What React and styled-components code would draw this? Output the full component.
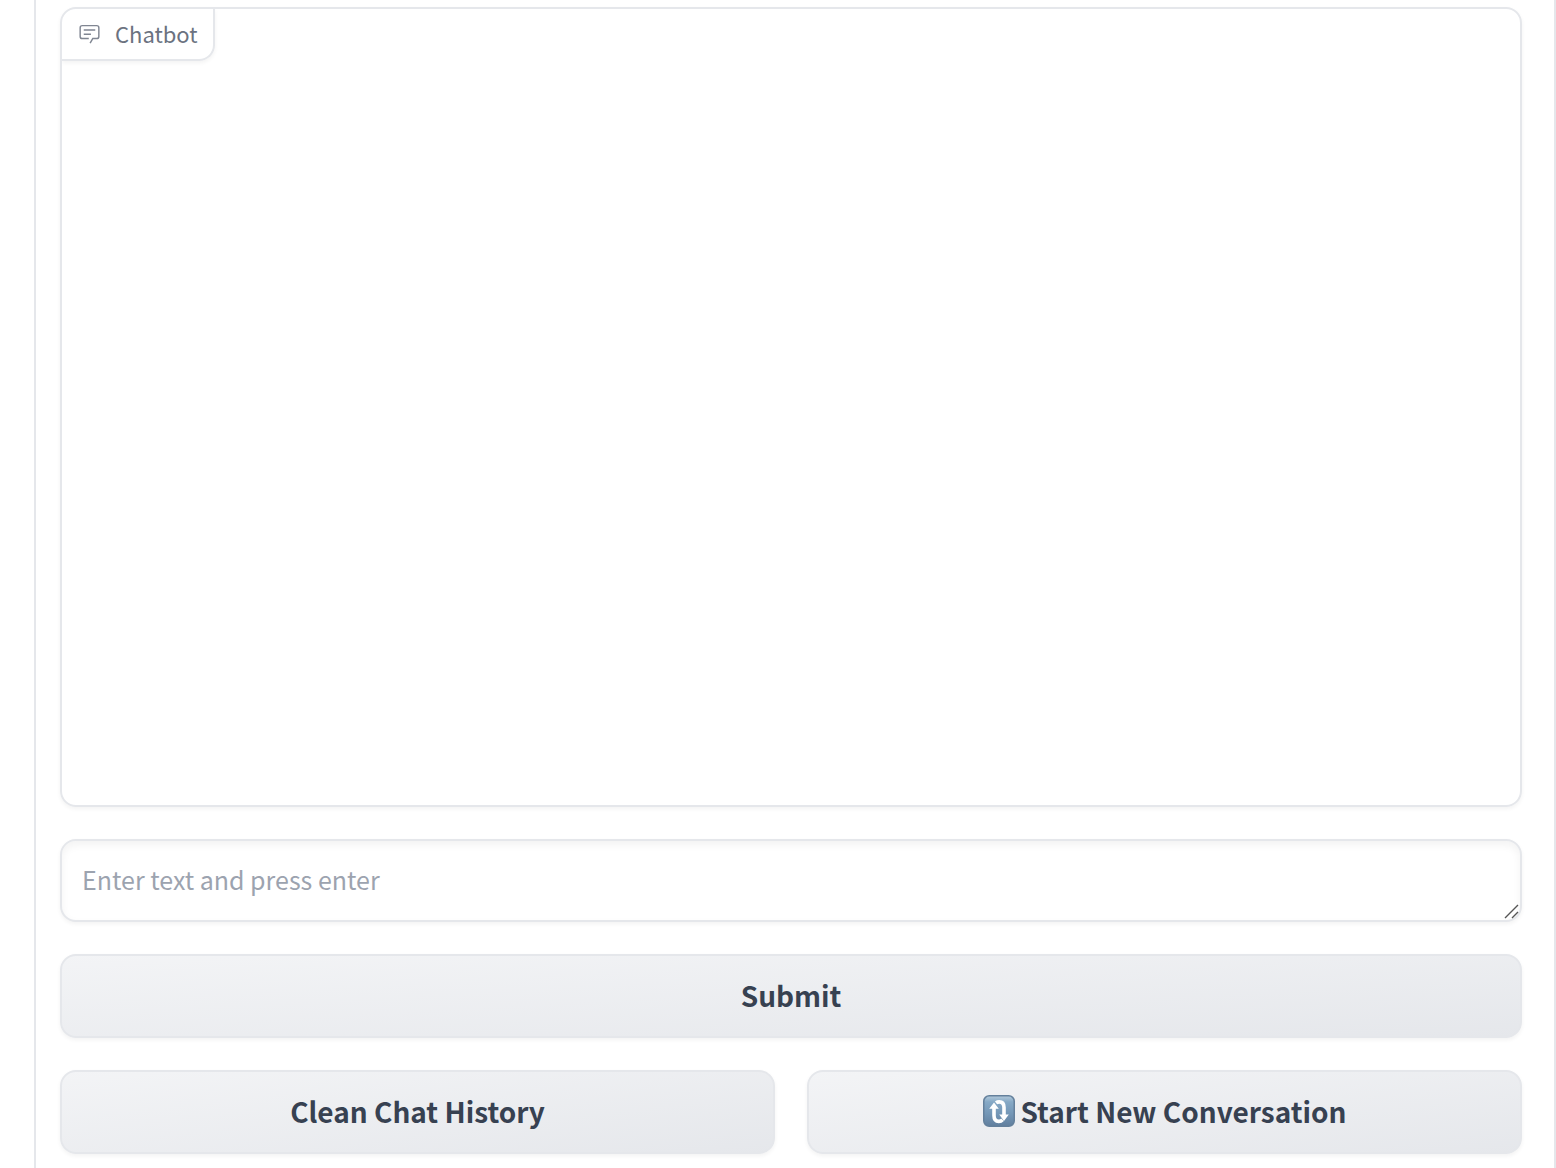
import React from "react";
import styled, { createGlobalStyle } from "styled-components";

const GlobalStyle = createGlobalStyle`
  *, *::before, *::after { box-sizing: border-box; }
  body {
    margin: 0;
    background: #ffffff;
    color: #374151;
    font-family: "Noto Sans CJK SC", "Open Sans", sans-serif;
  }
`;

const Panel = styled.main`
  display: flex;
  flex-direction: column;
  gap: 32px;
  min-height: 100vh;
  margin-left: 34px;
  padding: 7px 32px 14px 24px;
  border: solid #e5e7eb;
  border-width: 0 2px;
`;

const ChatCard = styled.section`
  display: flex;
  align-items: flex-start;
  height: 800px;
  overflow: hidden;
  border: 2px solid #e5e7eb;
  border-radius: 16px;
  box-shadow: 0 2px 4px rgba(0, 0, 0, 0.05);
`;

const ChatLabel = styled.h2`
  display: flex;
  align-items: center;
  gap: 14px;
  height: 52px;
  margin: 0;
  padding: 0 15px 2px 16px;
  border: solid #e5e7eb;
  border-width: 0 2px 2px 0;
  border-bottom-right-radius: 16px;
  box-shadow: 0 2px 4px rgba(0, 0, 0, 0.05);
  color: #6b7280;
  font-size: 22px;
  font-weight: 400;
  line-height: 32px;
`;

const LabelIcon = styled.svg`
  width: 23px;
  height: 23px;
  fill: currentColor;
  opacity: 0.85;
`;

const Field = styled.label`
  position: relative;
  display: flex;
`;

const MessageInput = styled.textarea`
  width: 100%;
  height: 83px;
  padding: 19px 20px;
  border: 2px solid #e5e7eb;
  border-radius: 16px;
  outline: none;
  background: #ffffff;
  box-shadow: 0 2px 4px rgba(0, 0, 0, 0.05), inset 0 4px 8px rgba(0, 0, 0, 0.05);
  color: #1f2937;
  font-family: inherit;
  font-size: 25px;
  line-height: 39px;
  overflow: hidden;
  resize: vertical;

  &::placeholder { color: #9ca3af; opacity: 1; }
  &::-webkit-resizer { background: transparent; }
`;

const Grip = styled.svg`
  position: absolute;
  right: 3px;
  bottom: 3px;
  width: 15px;
  height: 15px;
  pointer-events: none;
`;

const ButtonRow = styled.div`
  display: grid;
  grid-template-columns: 1fr 1fr;
  gap: 32px;
`;

const Button = styled.button`
  display: flex;
  align-items: center;
  justify-content: center;
  gap: 6px;
  height: 84px;
  padding: 0 24px 2px;
  border: 2px solid #e5e7eb;
  border-radius: 16px;
  background: linear-gradient(to bottom right, #f3f4f6, #e5e7eb) border-box;
  box-shadow: 0 2px 4px rgba(0, 0, 0, 0.05);
  color: #374151;
  font-family: inherit;
  font-size: 28px;
  font-weight: 600;
  line-height: 44px;
  cursor: pointer;
`;

const ButtonIcon = styled.svg`
  width: 32px;
  height: 32px;
`;

function ChatIcon() {
  return (
    <LabelIcon viewBox="0 0 32 32" aria-hidden="true">
      <path d="M17.74 30L16 29l4-7h6a2 2 0 0 0 2-2V8a2 2 0 0 0-2-2H6a2 2 0 0 0-2 2v12a2 2 0 0 0 2 2h9v2H6a4 4 0 0 1-4-4V8a4 4 0 0 1 4-4h20a4 4 0 0 1 4 4v12a4 4 0 0 1-4 4h-4.84Z" />
      <path d="M8 10h16v2H8zm0 6h10v2H8z" />
    </LabelIcon>
  );
}

function RestartIcon() {
  return (
    <ButtonIcon viewBox="0 0 32 32" aria-hidden="true">
      <defs>
        <linearGradient id="tile" x1="0" y1="0" x2="0" y2="1">
          <stop offset="0" stopColor="#b4cbdc" />
          <stop offset="0.2" stopColor="#86a9c6" />
          <stop offset="0.6" stopColor="#7396b6" />
          <stop offset="1" stopColor="#617f9e" />
        </linearGradient>
      </defs>
      <rect x="0.75" y="0.75" width="30.5" height="30.5" rx="5.5" fill="url(#tile)" stroke="#64809c" strokeWidth="1.5" />
      <g fill="none" stroke="#ffffff" strokeWidth="3.6">
        <path d="M11 13v7.5c0 3.6 1.8 5.9 4.8 5.9 1.6 0 2.8-.5 3.8-1.6" />
        <path d="M21 20v-7.5c0-3.6-1.8-5.6-4.8-5.6-1.3 0-2.3.3-3.2 1" />
      </g>
      <path fill="#ffffff" d="M11 7.4l4.8 6.4H6.2zM21 26l-4.8-6.4h9.6z" />
    </ButtonIcon>
  );
}

export default function App() {
  return (
    <>
      <GlobalStyle />
      <Panel>
        <ChatCard aria-labelledby="chat-title">
          <ChatLabel id="chat-title">
            <ChatIcon />
            Chatbot
          </ChatLabel>
        </ChatCard>
        <Field>
          <MessageInput rows={1} aria-label="Message" placeholder="Enter text and press enter" />
          <Grip viewBox="0 0 15 15" aria-hidden="true">
            <path d="M1 14L14 1M8 14l6-6" stroke="#555555" strokeWidth="1.4" fill="none" />
          </Grip>
        </Field>
        <Button type="button">Submit</Button>
        <ButtonRow>
          <Button type="button">Clean Chat History</Button>
          <Button type="button">
            <RestartIcon />
            Start New Conversation
          </Button>
        </ButtonRow>
      </Panel>
    </>
  );
}
